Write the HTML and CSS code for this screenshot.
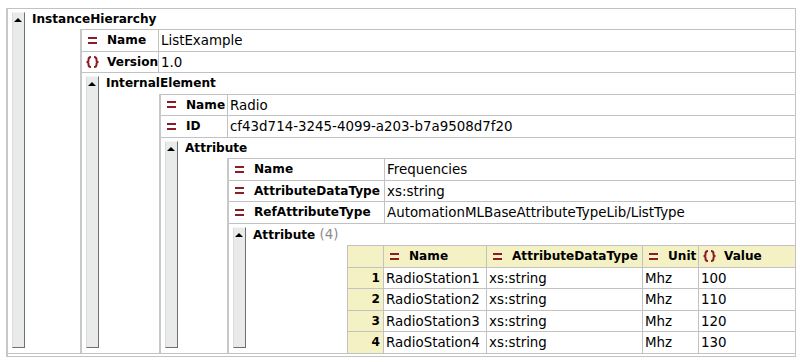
FILE: index.html
```html
<!DOCTYPE html>
<html>
<head>
    <title>InstanceHierarchy</title>
    <link rel="stylesheet" href="styles.css">
</head>
<body>
    <div class="grid">
        <div class="elem root">
            <div class="bar"><span class="tri"></span></div>
            <div class="body">
                <div class="title">InstanceHierarchy</div>
                <div class="kids k1">
                    <div class="row">
                        <div class="key"><span class="ico"><span class="eq"></span></span>Name</div>
                        <div class="val">ListExample</div>
                    </div>
                    <div class="row">
                        <div class="key"><span class="ico"><svg class="br" width="15" height="12" viewBox="0 0 15 12"><path d="M6 1Q3.5 1 3.5 3.5L3.5 4.5Q3.5 6 1.5 6Q3.5 6 3.5 7.5L3.5 8.5Q3.5 11 6 11M9 1Q11.5 1 11.5 3.5L11.5 4.5Q11.5 6 13.5 6Q11.5 6 11.5 7.5L11.5 8.5Q11.5 11 9 11"/></svg></span>Version</div>
                        <div class="val">1.0</div>
                    </div>

                    <div class="elem">
                        <div class="bar"><span class="tri"></span></div>
                        <div class="body">
                            <div class="title">InternalElement</div>
                            <div class="kids k2">
                                <div class="row">
                                    <div class="key"><span class="ico"><span class="eq"></span></span>Name</div>
                                    <div class="val">Radio</div>
                                </div>
                                <div class="row">
                                    <div class="key"><span class="ico"><span class="eq"></span></span>ID</div>
                                    <div class="val">cf43d714-3245-4099-a203-b7a9508d7f20</div>
                                </div>

                                <div class="elem">
                                    <div class="bar"><span class="tri"></span></div>
                                    <div class="body">
                                        <div class="title">Attribute</div>
                                        <div class="kids k3">
                                            <div class="row">
                                                <div class="key"><span class="ico"><span class="eq"></span></span>Name</div>
                                                <div class="val">Frequencies</div>
                                            </div>
                                            <div class="row">
                                                <div class="key"><span class="ico"><span class="eq"></span></span>AttributeDataType</div>
                                                <div class="val">xs:string</div>
                                            </div>
                                            <div class="row">
                                                <div class="key"><span class="ico"><span class="eq"></span></span>RefAttributeType</div>
                                                <div class="val">AutomationMLBaseAttributeTypeLib/ListType</div>
                                            </div>

                                            <div class="elem">
                                                <div class="bar"><span class="tri"></span></div>
                                                <div class="body">
                                                    <div class="title tall">Attribute <span class="count">(4)</span></div>
                                                    <div class="tbl">
                                                        <div class="hd"></div>
                                                        <div class="hd"><span class="ico"><span class="eq"></span></span>Name</div>
                                                        <div class="hd"><span class="ico"><span class="eq"></span></span>AttributeDataType</div>
                                                        <div class="hd"><span class="ico"><span class="eq"></span></span>Unit</div>
                                                        <div class="hd"><span class="ico"><svg class="br" width="15" height="12" viewBox="0 0 15 12"><path d="M6 1Q3.5 1 3.5 3.5L3.5 4.5Q3.5 6 1.5 6Q3.5 6 3.5 7.5L3.5 8.5Q3.5 11 6 11M9 1Q11.5 1 11.5 3.5L11.5 4.5Q11.5 6 13.5 6Q11.5 6 11.5 7.5L11.5 8.5Q11.5 11 9 11"/></svg></span>Value</div>

                                                        <div class="idx">1</div>
                                                        <div>RadioStation1</div>
                                                        <div>xs:string</div>
                                                        <div>Mhz</div>
                                                        <div>100</div>

                                                        <div class="idx">2</div>
                                                        <div>RadioStation2</div>
                                                        <div>xs:string</div>
                                                        <div>Mhz</div>
                                                        <div>110</div>

                                                        <div class="idx">3</div>
                                                        <div>RadioStation3</div>
                                                        <div>xs:string</div>
                                                        <div>Mhz</div>
                                                        <div>120</div>

                                                        <div class="idx">4</div>
                                                        <div>RadioStation4</div>
                                                        <div>xs:string</div>
                                                        <div>Mhz</div>
                                                        <div>130</div>
                                                    </div>
                                                </div>
                                            </div>
                                        </div>
                                    </div>
                                </div>
                            </div>
                        </div>
                    </div>
                </div>
            </div>
        </div>
    </div>
</body>
</html>
```

FILE: styles.css
```css
body {
    margin: 0;
    background: #fff;
    font-family: "DejaVu Sans", "Noto Sans", sans-serif;
    font-size: 13.4px;
    color: #000;
}

.grid {
    margin: 8px 0 0 6px;
    width: 790px;
    box-sizing: border-box;
    border: 1px solid #c2c2c2;
    border-left: 2px solid #c8c8c8;
    padding-bottom: 2px;
}

.elem {
    display: flex;
}

.root {
    border-bottom: 1px solid #c2c2c2;
}

.bar {
    flex: none;
    width: 13px;
    box-sizing: border-box;
    margin: 3px 0 5px 4px;
    padding: 5px 0 0 1px;
    background: #e9eaea;
    border: 1px solid;
    border-color: #f6f6f6 #6f6f6f #6f6f6f #dcdcdc;
}

.tri {
    display: block;
    width: 0;
    height: 0;
    border-left: 4px solid transparent;
    border-right: 4px solid transparent;
    border-bottom: 4px solid #000;
}

.body {
    flex: 1;
    min-width: 0;
    margin-left: 7px;
}

.title {
    height: 20.5px;
    line-height: 21.5px;
    font-weight: bold;
    font-size: 12.1px;
    white-space: nowrap;
}
.root > .body > .title { height: 20px; line-height: 21px; }
.title.tall { height: 21.5px; line-height: 22px; }

.count {
    font-weight: normal;
    font-size: 13.4px;
    color: #8a8a8a;
}

.kids {
    border-left: 2px solid #c8c8c8;
}
.k1 { margin-left: 48px; }
.k2 { margin-left: 53px; }
.k3 { margin-left: 42px; }

.kids > .row,
.kids > .elem {
    border-top: 1px solid #c2c2c2;
}

.row {
    display: flex;
    height: 21.5px;
    box-sizing: border-box;
}

.key {
    flex: none;
    display: flex;
    align-items: center;
    box-sizing: border-box;
    border-right: 1px solid #c2c2c2;
    font-weight: bold;
    font-size: 12.1px;
    white-space: nowrap;
}
.k1 > .row > .key { width: 77px; }
.k2 > .row > .key { width: 67px; }
.k3 > .row > .key { width: 156px; }

.val {
    padding-left: 2px;
    line-height: 21px;
    white-space: nowrap;
}

.ico {
    flex: none;
    display: inline-flex;
    justify-content: center;
    align-items: center;
    width: 20px;
    margin-right: 5px;
}

.eq {
    display: block;
    width: 9px;
    height: 7px;
    box-sizing: border-box;
    border-top: 2px solid #8a1c28;
    border-bottom: 2px solid #8a1c28;
}

.br path {
    fill: none;
    stroke: #8a1c28;
    stroke-width: 2;
}

.tbl {
    margin-left: 94px;
    display: grid;
    grid-template-columns: 36px 103px 156px 56px 1fr;
    border-left: 1px solid #c2c2c2;
}

.tbl > div {
    height: 21.5px;
    box-sizing: border-box;
    line-height: 21px;
    padding-left: 2px;
    border-top: 1px solid #c2c2c2;
    border-right: 1px solid #c2c2c2;
    white-space: nowrap;
    overflow: hidden;
}
.tbl > div:nth-child(5n) { border-right: none; }

.tbl > .hd {
    display: flex;
    align-items: center;
    padding-left: 0;
    background: #f4f2c4;
    font-weight: bold;
    font-size: 12.1px;
}

.tbl > .idx {
    background: #f4f2c4;
    font-weight: bold;
    font-size: 12.1px;
    text-align: right;
    padding-right: 3px;
}
```
